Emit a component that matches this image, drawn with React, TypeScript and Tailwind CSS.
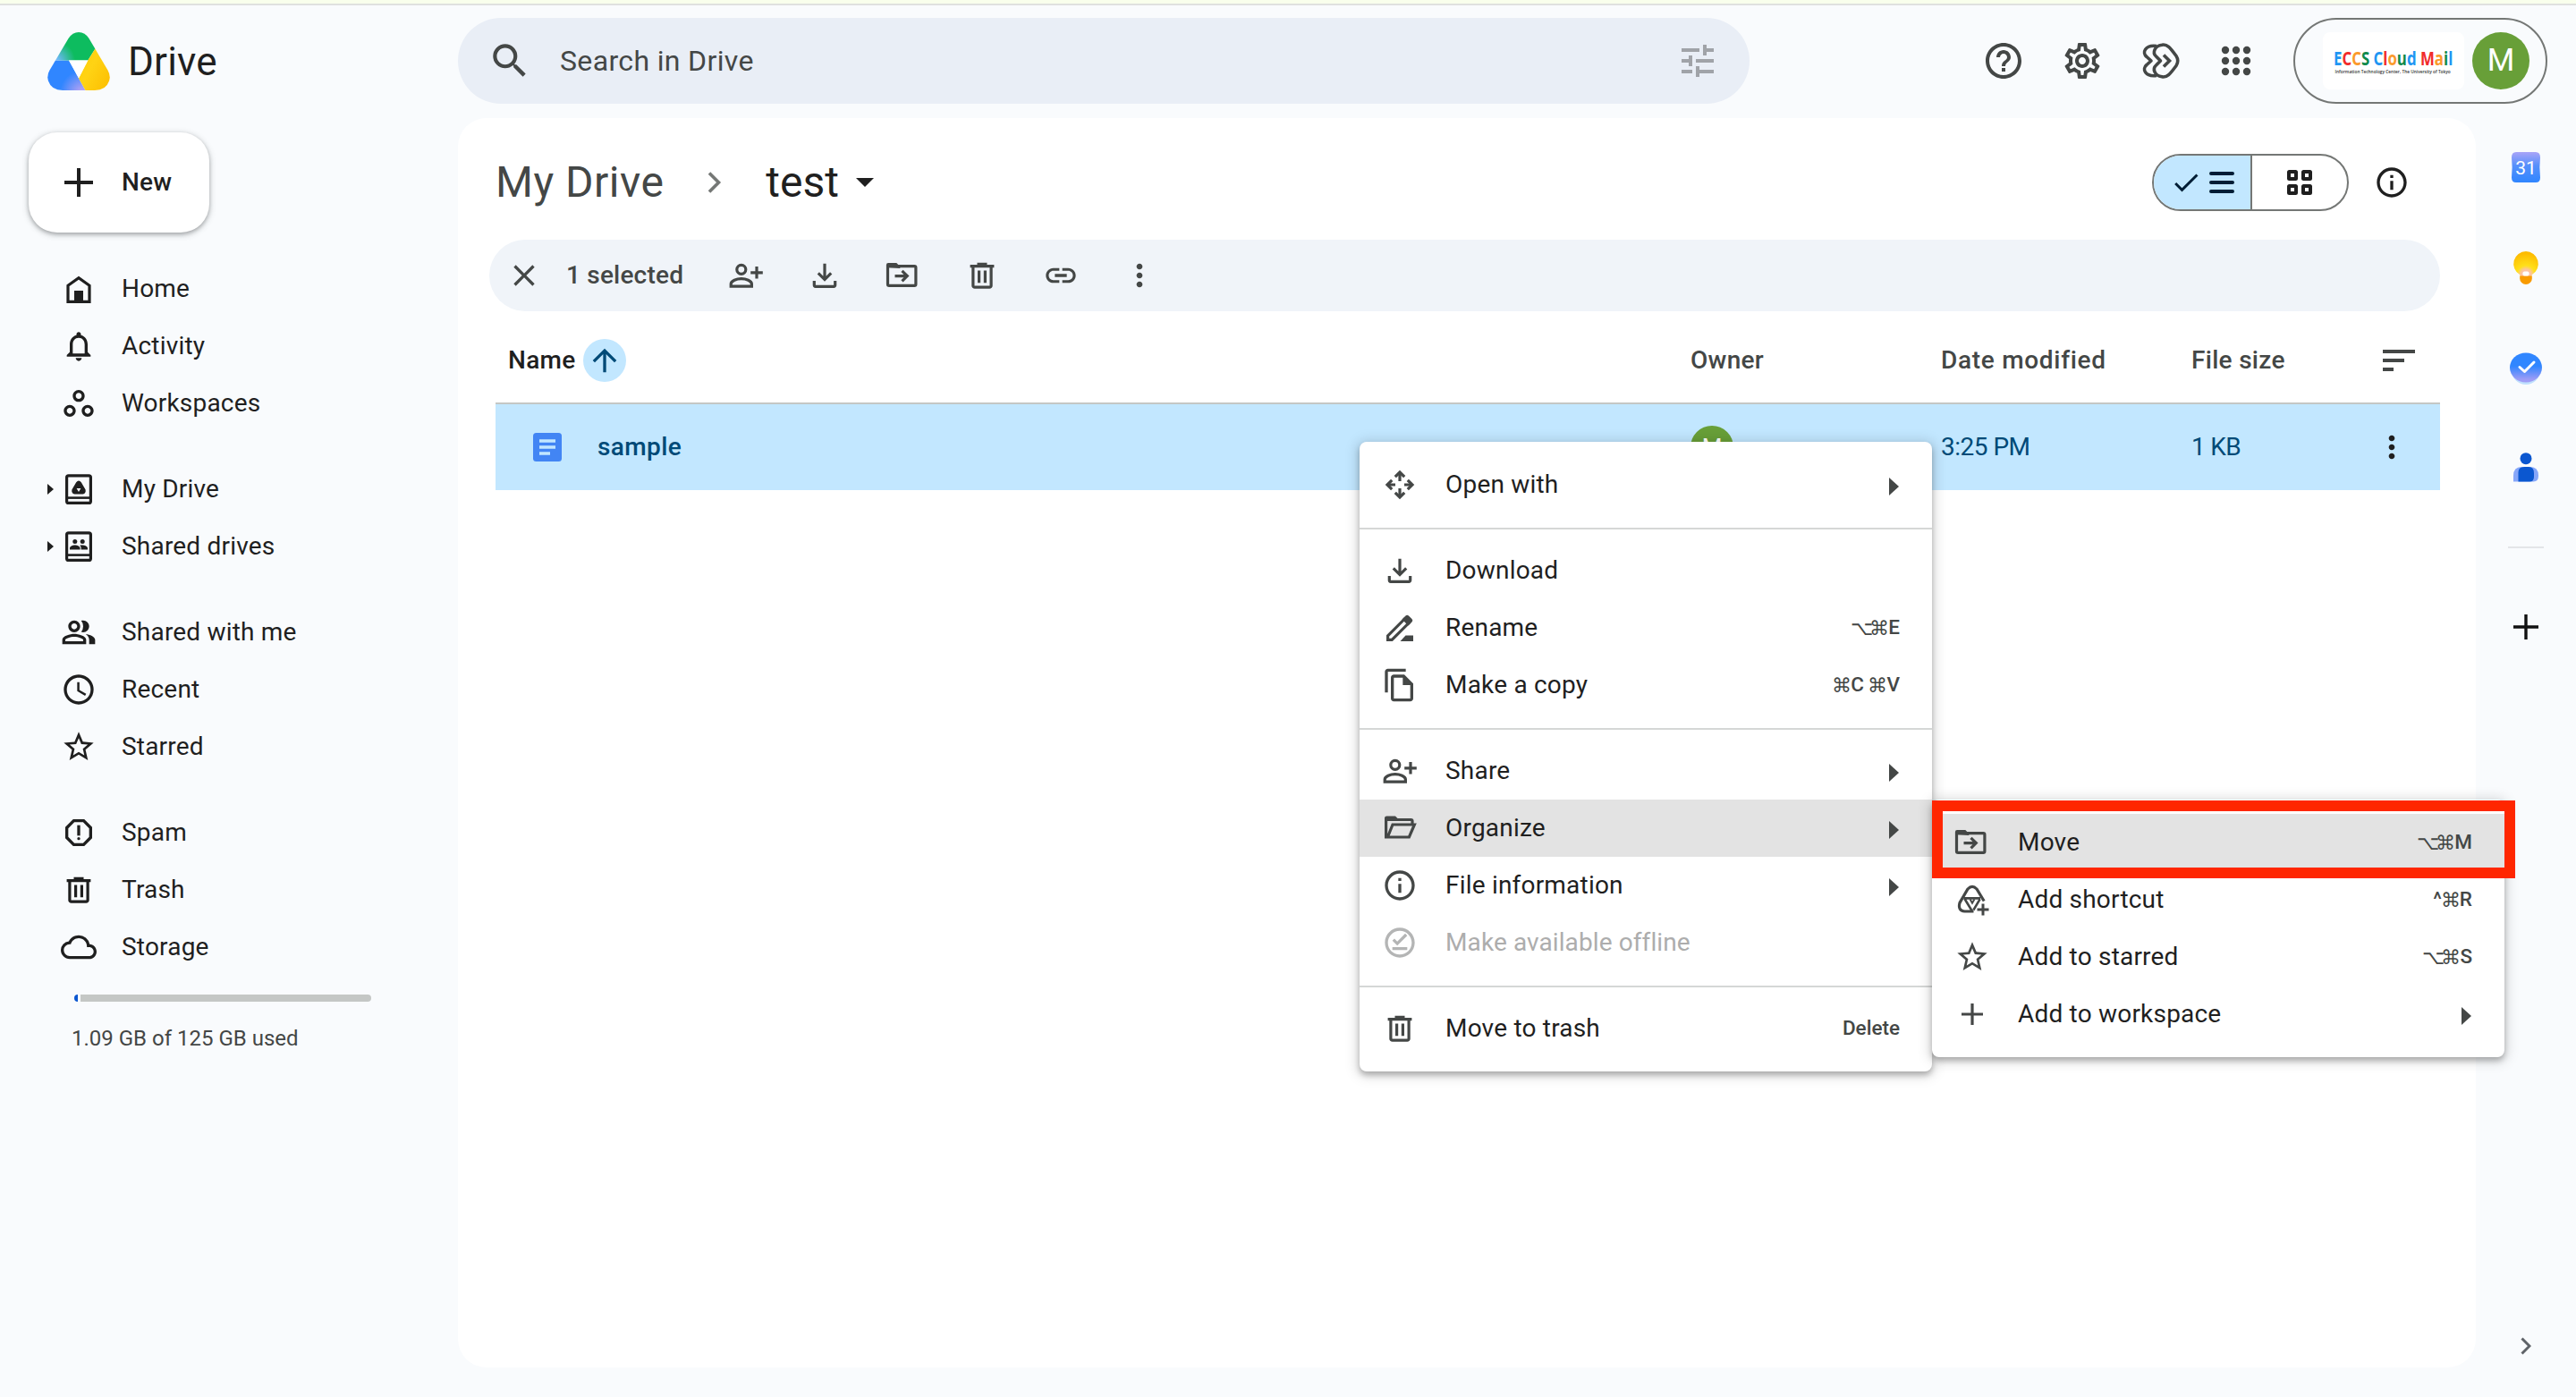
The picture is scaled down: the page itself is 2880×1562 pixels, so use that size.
import type { ReactNode } from "react";
import {
  MdAccessTime,
  MdArrowUpward,
  MdCheck,
  MdClose,
  MdCloudQueue,
  MdHelpOutline,
  MdInfoOutline,
  MdLink,
  MdMoreVert,
  MdNotificationsNone,
  MdOutlineFileCopy,
  MdOutlineOfflinePin,
  MdOutlinePeopleAlt,
  MdOutlineReport,
  MdOutlineSettings,
  MdOutlineWorkspaces,
  MdSearch,
  MdSort,
  MdStarBorder,
  MdTune,
} from "react-icons/md";

function LineIcon({ children }: { children: ReactNode }) {
  return (
    <svg viewBox="0 0 40 40" fill="none" stroke="currentColor" strokeWidth={3.2} className="size-10 shrink-0">
      {children}
    </svg>
  );
}

const HomeIcon = () => (
  <LineIcon>
    <path d="M8 34.4V16.2L20 7.6l12 8.6v18.2z" />
    <path d="M15 22h10v13H15z" fill="currentColor" stroke="none" />
  </LineIcon>
);

const MyDriveIcon = () => (
  <LineIcon>
    <rect x="6.6" y="4.8" width="26.8" height="30.6" rx="2" />
    <path d="M7 29.6h26" strokeWidth="2.6" />
    <path
      d="M17.2 12.2Q20 8.6 22.8 12.2L27.6 20.4Q28.4 24.6 24.6 25.4H15.4Q11.6 24.6 12.4 20.4ZM17.6 19l2.4 4 2.4-4z"
      fill="currentColor"
      fillRule="evenodd"
      stroke="none"
    />
  </LineIcon>
);

const SharedDrivesIcon = () => (
  <LineIcon>
    <rect x="6.6" y="4.8" width="26.8" height="30.6" rx="2" />
    <path d="M7 29.6h26" strokeWidth="2.6" />
    <g fill="currentColor" stroke="none">
      <circle cx="15.8" cy="14.4" r="2.5" />
      <circle cx="24.2" cy="14.4" r="2.5" />
      <path d="M10 23.6v-1.4c0-2.4 3.2-3.6 5.8-3.6s5.8 1.2 5.8 3.6v1.4zM22.6 23.6v-1.8c0-1.2-.5-2.2-1.4-3 4.2-.8 8.8.6 8.8 3.4v1.4z" />
    </g>
  </LineIcon>
);

const TrashIcon = () => (
  <LineIcon>
    <path d="M6.6 9.6h26.8M14.5 7.4h11" />
    <path d="M9.9 10v21.4a1.8 1.8 0 0 0 1.8 1.8h16.6a1.8 1.8 0 0 0 1.8-1.8V10" />
    <path d="M16.6 14.6v13.6M23.4 14.6v13.6" />
  </LineIcon>
);

const PersonAddIcon = () => (
  <LineIcon>
    <circle cx="14.8" cy="13.3" r="5" />
    <path d="M3.2 32.2v-2.6c0-3.8 6.4-6 11.6-6s11.6 2.2 11.6 6v2.6z" />
    <path d="M32 10v13.6M25.2 16.8h13.6" />
  </LineIcon>
);

const DownloadIcon = () => (
  <LineIcon>
    <path d="M8.3 26v4.8a1.5 1.5 0 0 0 1.5 1.5h20.4a1.5 1.5 0 0 0 1.5-1.5V26" />
    <path d="M20 6.8v17.4M12.8 17.4l7.2 7.2 7.2-7.2" />
  </LineIcon>
);

const RenameIcon = () => (
  <LineIcon>
    <path d="M6.6 33.4v-4.6L25.2 10.2l4.6 4.6L11.2 33.4z" />
    <path
      d="M22.5 10.5l4-4a2.4 2.4 0 0 1 3.4 0l3.6 3.6a2.4 2.4 0 0 1 0 3.4l-4 4z"
      fill="currentColor"
      stroke="none"
    />
    <path d="M20.5 35l6-6.4H35V35z" fill="currentColor" stroke="none" />
  </LineIcon>
);

const FolderMoveIcon = () => (
  <LineIcon>
    <g transform="translate(-1.5 0)">
      <rect x="4" y="9.6" width="31.4" height="21.8" rx="1.6" />
      <path d="M2.4 11V8.2a2.2 2.2 0 0 1 2.2-2.2h9.2l4 4V12z" fill="currentColor" stroke="none" />
      <path d="M12 20.6h13M20 14.8l5.8 5.8-5.8 5.8" />
    </g>
  </LineIcon>
);

const FolderOpenIcon = () => (
  <LineIcon>
    <path d="M34 14.4V12a1.5 1.5 0 0 0-1.5-1.5H4.6V30h25.8l6-14H12L6.4 30" />
    <path d="M3 12V8.6A2.2 2.2 0 0 1 5.2 6.6H15l4 4V12z" fill="currentColor" stroke="none" />
  </LineIcon>
);

const OpenWithIcon = () => (
  <LineIcon>
    <path d="M20 7v9M20 24v9M6 20h9M25 20h9" />
    <path d="M14.8 11.2L20 6l5.2 5.2M14.8 28.8L20 34l5.2-5.2M11.2 14.8L6 20l5.2 5.2M28.8 14.8L34 20l-5.2 5.2" />
  </LineIcon>
);

const ShortcutIcon = () => (
  <LineIcon>
    <path d="M33.2 21.5L25 8Q20 2.6 15 8L6 23.4Q3.6 32.4 11.6 33H21.5" />
    <path d="M10.5 18.4h18.5M11.5 19l8.2 13.5M28.6 19.4L21.4 31.5" strokeWidth="2.6" />
    <path d="M17.6 19.5l2.4 4.2 2.4-4.2" strokeWidth="2" />
    <path d="M32 24.5v13M25.5 31h13" strokeWidth="3" />
  </LineIcon>
);

const PlusIcon = () => (
  <LineIcon>
    <path d="M20 8v24M8 20h24" />
  </LineIcon>
);

function DriveLogo() {
  return (
    <svg viewBox="0 0 70 65" className="h-[65px] w-[70px] shrink-0">
      <defs>
        <clipPath id="drive-shape">
          <path d="M23.5 7Q28 0 35 0T46.5 7L67.5 42.5Q71 48.5 69 54.5 65.5 65 53 65H17Q4.5 65 1 54.5-1 48.5 2.5 42.5Z" />
        </clipPath>
        <radialGradient id="drive-green" gradientUnits="userSpaceOnUse" cx="9" cy="32" r="22">
          <stop offset="0.15" stopColor="#6cb8f5" />
          <stop offset="1" stopColor="#0dbc5f" />
        </radialGradient>
        <radialGradient id="drive-blue" gradientUnits="userSpaceOnUse" cx="39" cy="68" r="25">
          <stop offset="0.1" stopColor="#b6a2f4" />
          <stop offset="1" stopColor="#3086ff" />
        </radialGradient>
        <linearGradient id="drive-yellow" x1="0" y1="0" x2="1" y2="1">
          <stop offset="0" stopColor="#ffcc00" />
          <stop offset="0.5" stopColor="#ffd314" />
          <stop offset="1" stopColor="#fcbd00" />
        </linearGradient>
      </defs>
      <g clipPath="url(#drive-shape)">
        <path d="M0 31.5h24L42.5 65H0z" fill="url(#drive-blue)" />
        <path d="M0 0h65L45.3 31.6H0z" fill="url(#drive-green)" />
        <path d="M65 0h5v65H42.5L35 51.5l10.3-19.9z" fill="url(#drive-yellow)" />
        <path d="M24 31.6h21.3L35 51.5z" fill="#fff" />
      </g>
    </svg>
  );
}

const orgName: [string, string][] = [
  ["E", "text-[#2196f3]"],
  ["C", "text-[#f12c2c]"],
  ["C", "text-[#fb9a2c]"],
  ["S ", "text-[#0f8a4c]"],
  ["C", "text-[#2196f3]"],
  ["l", "text-[#f12c2c]"],
  ["o", "text-[#fb9a2c]"],
  ["u", "text-[#0f8a4c]"],
  ["d ", "text-[#2196f3]"],
  ["M", "text-[#f12c2c]"],
  ["a", "text-[#fb9a2c]"],
  ["i", "text-[#0f8a4c]"],
  ["l", "text-[#2196f3]"],
];

function Account() {
  return (
    <div className="flex h-24 w-[284px] items-center justify-between rounded-full border-2 border-[#747775] pr-[18px] pl-[31px]">
      <div className="flex h-16 w-[158px] flex-col justify-center rounded-lg bg-white pl-3">
        <div className="h-6 w-[132px] origin-left scale-x-[0.765] font-['Open_Sans'] text-[22px] leading-6 font-bold whitespace-pre">
          {orgName.map(([letter, color], i) => (
            <span key={i} className={color}>
              {letter}
            </span>
          ))}
        </div>
        <div className="w-[132px] origin-left scale-x-[0.8] pl-0.5 font-['Open_Sans'] text-[6px] leading-[9px] font-semibold whitespace-nowrap text-[#333]">
          Information Technology Center, The University of Tokyo
        </div>
      </div>
      <div className="flex size-16 items-center justify-center rounded-full bg-[#689f38] text-[35px] text-white">
        M
      </div>
    </div>
  );
}

function Header() {
  return (
    <header className="flex h-[126px] items-start pt-[14px]">
      <div className="flex h-24 w-[512px] shrink-0 items-center pl-[53px]">
        <DriveLogo />
        <span className="ml-[20px] pt-0.5 text-[44px] tracking-[0.2px] text-[#1f1f1f]">Drive</span>
      </div>
      <div className="flex h-24 w-[1444px] shrink-0 items-center rounded-full bg-[#e9eef6] pr-[34px] pl-[33px] text-[#444746]">
        <MdSearch className="size-[50px]" />
        <span className="ml-[31px] flex-1 text-[32px] tracking-[0.35px]">Search in Drive</span>
        <MdTune className="size-12 text-[#a0a3a8]" />
      </div>
      <div className="flex h-24 flex-1 items-center justify-end pr-8 text-[#444746]">
        <MdHelpOutline className="size-12" />
        <MdOutlineSettings className="ml-10 size-12" />
        <svg
          viewBox="0 0 48 48"
          className="ml-[39px] size-12"
          fill="none"
          stroke="currentColor"
          strokeWidth="3.6"
          strokeLinejoin="round"
        >
          <path d="M26 6.2C32 5 35 9 42 18.5Q45.5 24 42 29.5C35 39 32 43 26 41.8C18 41 15 33 19.5 29L24.5 24 19.5 19C15 15 18 7 26 6.2Z" />
          <path d="M20 7.5C7 6 3.5 15 9 19.5L14 24l-5 4.5C3.5 33 7 42 20 40.5" />
          <path d="M28 17.5L34.5 24 28 30.5" strokeLinejoin="miter" />
        </svg>
        <svg viewBox="0 0 48 48" className="ml-[37px] size-12" fill="currentColor">
          {[12, 24, 36].map((y) => [12, 24, 36].map((x) => <circle key={`${x}-${y}`} cx={x} cy={y} r="4.2" />))}
        </svg>
        <div className="ml-10">
          <Account />
        </div>
      </div>
    </header>
  );
}

type NavItem = { label: string; icon: ReactNode; expandable?: boolean };

const navGroups: NavItem[][] = [
  [
    { label: "Home", icon: <HomeIcon /> },
    { label: "Activity", icon: <MdNotificationsNone className="size-10" /> },
    { label: "Workspaces", icon: <MdOutlineWorkspaces className="size-10" /> },
  ],
  [
    { label: "My Drive", icon: <MyDriveIcon />, expandable: true },
    { label: "Shared drives", icon: <SharedDrivesIcon />, expandable: true },
  ],
  [
    { label: "Shared with me", icon: <MdOutlinePeopleAlt className="size-10" /> },
    { label: "Recent", icon: <MdAccessTime className="size-10" /> },
    { label: "Starred", icon: <MdStarBorder className="size-10" /> },
  ],
  [
    { label: "Spam", icon: <MdOutlineReport className="size-10" /> },
    { label: "Trash", icon: <TrashIcon /> },
    { label: "Storage", icon: <MdCloudQueue className="size-10" /> },
  ],
];

function Sidebar() {
  return (
    <aside className="w-[512px] shrink-0 pt-4 text-[28px] text-[#1f1f1f]">
      <button className="ml-8 flex h-28 w-[202px] items-center rounded-[32px] bg-white pl-9 font-medium shadow-[0_2px_4px_rgba(60,64,67,0.35),0_2px_6px_2px_rgba(60,64,67,0.15)]">
        <svg viewBox="0 0 40 40" className="size-10" stroke="currentColor" strokeWidth="4">
          <path d="M20 4v32M4 20h32" />
        </svg>
        <span className="ml-7 tracking-[0.2px]">New</span>
      </button>
      <nav className="mt-[31px] flex flex-col gap-8 tracking-[0.2px]">
        {navGroups.map((group, i) => (
          <ul key={i}>
            {group.map((item) => (
              <li key={item.label} className="flex h-16 items-center pl-12">
                <span className="w-5 pl-[5px]">
                  {item.expandable && (
                    <svg viewBox="0 0 7 12" className="h-3 w-[7px]" fill="currentColor">
                      <path d="M0 0l7 6-7 6z" />
                    </svg>
                  )}
                </span>
                {item.icon}
                <span className="ml-7">{item.label}</span>
              </li>
            ))}
          </ul>
        ))}
      </nav>
      <div className="mt-[21px] ml-[83px] flex gap-[3px]">
        <span className="h-2 w-1 rounded-l-full bg-[#0b57d0]" />
        <span className="h-2 w-[325px] rounded-r-full bg-[#c4c7c5]" />
      </div>
      <p className="mt-[23px] ml-20 text-[24px] leading-9 text-[#444746]">1.09 GB of 125 GB used</p>
    </aside>
  );
}

function Breadcrumb() {
  return (
    <div className="flex h-[136px] items-center pt-2 pr-9 pl-[42px]">
      <h1 className="flex items-center text-[48px]">
        <span className="tracking-[0.5px] text-[#444746]">My Drive</span>
        <svg viewBox="0 0 16 24" className="ml-[49px] h-6 w-4" fill="none" stroke="#747775" strokeWidth="3.6">
          <path d="M2 1.5L12.5 12 2 22.5" />
        </svg>
        <span className="ml-[49px] text-[#1f1f1f]">test</span>
        <svg viewBox="0 0 20 10" className="ml-[19px] h-2.5 w-5" fill="#1f1f1f">
          <path d="M0 0h20L10 10z" />
        </svg>
      </h1>
      <div className="ml-auto flex h-16 w-[220px] overflow-hidden rounded-full border-2 border-[#747775]">
        <div className="flex w-[110px] items-center justify-center gap-2 border-r-2 border-[#747775] bg-[#c2e7ff] pr-px text-[#001d35]">
          <MdCheck className="size-9" />
          <svg viewBox="0 0 28 26" className="h-[26px] w-7" stroke="currentColor" strokeWidth="4" strokeLinecap="round">
            <path d="M2 3h24M2 13h24M2 23h24" />
          </svg>
        </div>
        <div className="flex flex-1 items-center justify-center text-[#1f1f1f]">
          <svg viewBox="0 0 28 28" className="size-7" fill="none" stroke="currentColor" strokeWidth="4">
            <rect x="2" y="2" width="8" height="8" rx="0.5" />
            <rect x="18" y="2" width="8" height="8" rx="0.5" />
            <rect x="2" y="18" width="8" height="8" rx="0.5" />
            <rect x="18" y="18" width="8" height="8" rx="0.5" />
          </svg>
        </div>
      </div>
      <MdInfoOutline className="mr-[38px] ml-7 size-10 text-[#1f1f1f]" />
    </div>
  );
}

function SelectionBar() {
  return (
    <div className="mr-10 ml-[35px] flex h-20 items-center rounded-full bg-[#f0f4f9] pl-[19px] text-[#444746]">
      <MdClose className="size-10" />
      <span className="ml-[27px] w-[181px] text-[28px] font-medium tracking-[0.2px]">1 selected</span>
      <div className="flex items-center gap-12">
        <PersonAddIcon />
        <DownloadIcon />
        <FolderMoveIcon />
        <TrashIcon />
        <MdLink className="size-10" />
        <MdMoreVert className="size-10" />
      </div>
    </div>
  );
}

function FileTable() {
  return (
    <div className="mr-10 ml-[42px]">
      <div className="flex h-[104px] items-center border-b-2 border-[#c4c7c5] pt-2 text-[28px] font-medium tracking-[0.3px] text-[#444746]">
        <div className="flex w-[1336px] items-center pl-[14px] text-[#1f1f1f]">
          Name
          <span className="ml-2 flex size-12 items-center justify-center rounded-full bg-[#c2e7ff] text-[#004a77]">
            <MdArrowUpward className="size-10" />
          </span>
        </div>
        <div className="w-[280px]">Owner</div>
        <div className="w-[280px] tracking-[0.7px]">Date modified</div>
        <div className="w-[208px]">File size</div>
        <MdSort className="size-12" />
      </div>
      <div className="flex h-24 items-center bg-[#c2e7ff] text-[28px] text-[#004a77]">
        <div className="flex w-[1336px] items-center pl-[42px] font-medium">
          <svg viewBox="0 0 32 32" className="size-8">
            <rect width="32" height="32" rx="3.5" fill="#4285f4" />
            <path d="M7 9h18M7 16h18M7 23h12" stroke="#c2e7ff" strokeWidth="3.6" />
          </svg>
          <span className="ml-10 tracking-[0.4px]">sample</span>
        </div>
        <div className="w-[280px]">
          <span className="flex size-12 items-center justify-center rounded-full bg-[#689f38] text-[26px] text-white">
            M
          </span>
        </div>
        <div className="w-[280px] tracking-[-0.5px]">3:25 PM</div>
        <div className="w-[204px] tracking-[-0.7px]">1 KB</div>
        <MdMoreVert className="size-10 text-[#1f1f1f]" />
      </div>
    </div>
  );
}

function SideRail() {
  return (
    <div className="flex w-28 shrink-0 flex-col items-center pt-[35px]">
      <svg viewBox="0 0 40 40" className="size-10">
        <defs>
          <linearGradient id="cal" x1="0" y1="0" x2="0" y2="1">
            <stop offset="0" stopColor="#a9a4f8" />
            <stop offset="0.45" stopColor="#5590fb" />
            <stop offset="1" stopColor="#3086ff" />
          </linearGradient>
        </defs>
        <path d="M9 3h22q5 0 5 6-1.2 10 0 22.5 0 5.5-5 5.5H9q-5 0-5-5.5Q5.2 19 4 9q0-6 5-6z" fill="url(#cal)" />
        <text x="20" y="27.5" textAnchor="middle" fontSize="21" fill="#fff">
          31
        </text>
      </svg>
      <svg viewBox="0 0 40 40" className="mt-[73px] size-10">
        <defs>
          <radialGradient id="bulb" gradientUnits="userSpaceOnUse" cx="20" cy="27" r="24">
            <stop offset="0" stopColor="#fbb8c8" />
            <stop offset="0.25" stopColor="#fdc69a" />
            <stop offset="0.42" stopColor="#ffe01a" />
            <stop offset="1" stopColor="#fdbb00" />
          </radialGradient>
        </defs>
        <path d="M20 1a14 14 0 0 1 7 26l-1 2.5H14L13 27A14 14 0 0 1 20 1z" fill="url(#bulb)" />
        <path d="M13.2 28.5h13.6v3a6.8 6.5 0 0 1-13.6 0z" fill="#f99b00" />
        <rect x="16.5" y="23.5" width="7" height="5" rx="1.8" fill="#fff" />
      </svg>
      <svg viewBox="0 0 40 40" className="mt-[72px] size-10">
        <defs>
          <linearGradient id="task" x1="0" y1="0" x2="0" y2="1">
            <stop offset="0.45" stopColor="#3086ff" />
            <stop offset="0.9" stopColor="#9d9cf6" />
          </linearGradient>
        </defs>
        <circle cx="20" cy="22" r="16" fill="#bfe0fd" />
        <ellipse cx="20" cy="19" rx="18" ry="16.5" fill="url(#task)" />
        <path
          d="M13 18.5l5.5 5L29 13"
          fill="none"
          stroke="#fff"
          strokeWidth="3"
          strokeLinecap="round"
          strokeLinejoin="round"
        />
      </svg>
      <svg viewBox="0 0 40 40" className="mt-[71px] size-10">
        <circle cx="20" cy="9.7" r="6.5" fill="#0b57d0" />
        <path d="M6 35.5V29q0-10 9-10h10q9 0 9 10 0 6.5-5.5 6.5z" fill="#86a6f9" />
        <path d="M11.5 35.5V25q0-6 7-6H23q6 0 6 7v4q0 5.5-5 5.5z" fill="#0b57d0" />
      </svg>
      <span className="mt-[68px] h-0.5 w-10 bg-[#e3e5e8]" />
      <svg viewBox="0 0 28 28" className="mt-[74px] size-7" stroke="#111" strokeWidth="3.4">
        <path d="M14 0v28M0 14h28" />
      </svg>
      <svg viewBox="0 0 12 20" className="mt-auto mb-[47px] h-5 w-3" fill="none" stroke="#5f6368" strokeWidth="3">
        <path d="M1.5 1.5L10 10l-8.5 8.5" />
      </svg>
    </div>
  );
}

type MenuEntry = {
  label: string;
  icon: ReactNode;
  keys?: string[];
  submenu?: boolean;
  active?: boolean;
  disabled?: boolean;
};

// modifier glyphs come from a fallback font that is wider than the letters
const keyStyle: Record<string, string> = {
  "⌥": "-mr-[3px] text-[22px] font-normal",
  "⌘": "flex w-5 justify-center text-[22px] font-normal",
};

function MenuRow({ label, icon, keys, submenu, active, disabled }: MenuEntry) {
  return (
    <li className={`flex h-16 items-center pr-9 pl-[25px] text-[28px] text-[#1f1f1f] ${active ? "bg-[#e3e3e3]" : ""}`}>
      <span className={`flex w-10 shrink-0 ${disabled ? "text-[#b4b5b5]" : "text-[#444746]"}`}>{icon}</span>
      <span
        className={`ml-[31px] whitespace-nowrap ${disabled ? "tracking-[0.1px] text-[#adadad]" : "tracking-[0.2px]"}`}
      >
        {label}
      </span>
      {keys && (
        <span className="ml-auto flex items-center text-[22.5px] font-medium whitespace-pre text-[#444746]">
          {keys.map((part, i) => (
            <span key={i} className={keyStyle[part]}>
              {part}
            </span>
          ))}
        </span>
      )}
      {submenu && (
        <svg viewBox="0 0 11 20" className="mt-1 mr-px ml-auto h-5 w-[11px]" fill="#444746">
          <path d="M0 0l11 10L0 20z" />
        </svg>
      )}
    </li>
  );
}

const fileMenu: MenuEntry[][] = [
  [{ label: "Open with", icon: <OpenWithIcon />, submenu: true }],
  [
    { label: "Download", icon: <DownloadIcon /> },
    { label: "Rename", icon: <RenameIcon />, keys: ["⌥", "⌘", "E"] },
    { label: "Make a copy", icon: <MdOutlineFileCopy className="size-10" />, keys: ["⌘", "C ", "⌘", "V"] },
  ],
  [
    { label: "Share", icon: <PersonAddIcon />, submenu: true },
    { label: "Organize", icon: <FolderOpenIcon />, submenu: true, active: true },
    { label: "File information", icon: <MdInfoOutline className="size-10" />, submenu: true },
    { label: "Make available offline", icon: <MdOutlineOfflinePin className="size-10" />, disabled: true },
  ],
  [{ label: "Move to trash", icon: <TrashIcon />, keys: ["Delete"] }],
];

const organizeMenu: MenuEntry[] = [
  { label: "Move", icon: <FolderMoveIcon />, keys: ["⌥", "⌘", "M"], active: true },
  { label: "Add shortcut", icon: <ShortcutIcon />, keys: ["^", "⌘", "R"] },
  { label: "Add to starred", icon: <MdStarBorder className="size-10" />, keys: ["⌥", "⌘", "S"] },
  { label: "Add to workspace", icon: <PlusIcon />, submenu: true },
];

export default function App() {
  return (
    <div className="relative flex h-[1562px] w-[2880px] flex-col overflow-hidden bg-[#f9fbfd] font-[Roboto,sans-serif]">
      <div className="h-1.5 shrink-0 border-b-2 border-[#dfe1df] bg-[#f9ffec]" />
      <Header />
      <div className="flex flex-1">
        <Sidebar />
        <main className="mb-[33px] w-[2256px] shrink-0 rounded-[32px] bg-white">
          <Breadcrumb />
          <SelectionBar />
          <FileTable />
        </main>
        <SideRail />
      </div>

      <div className="absolute top-[494px] left-[1520px] w-[640px] rounded-lg bg-white shadow-[0_4px_6px_rgba(0,0,0,0.25),0_2px_14px_4px_rgba(0,0,0,0.13)]">
        {fileMenu.map((group, i) => (
          <ul key={i} className={i > 0 ? "border-t-2 border-[#d5d7d6] pt-[14px] pb-4" : "py-4"}>
            {group.map((entry) => (
              <MenuRow key={entry.label} {...entry} />
            ))}
          </ul>
        ))}
      </div>

      <ul className="absolute top-[894px] left-[2160px] w-[640px] rounded-lg bg-white py-4 shadow-[0_4px_6px_rgba(0,0,0,0.25),0_2px_14px_4px_rgba(0,0,0,0.13)]">
        {organizeMenu.map((entry) => (
          <MenuRow key={entry.label} {...entry} />
        ))}
      </ul>
      <div className="absolute top-[895px] left-[2160px] h-[87px] w-[652px] border-[12px] border-[#ff2600]" />
    </div>
  );
}
